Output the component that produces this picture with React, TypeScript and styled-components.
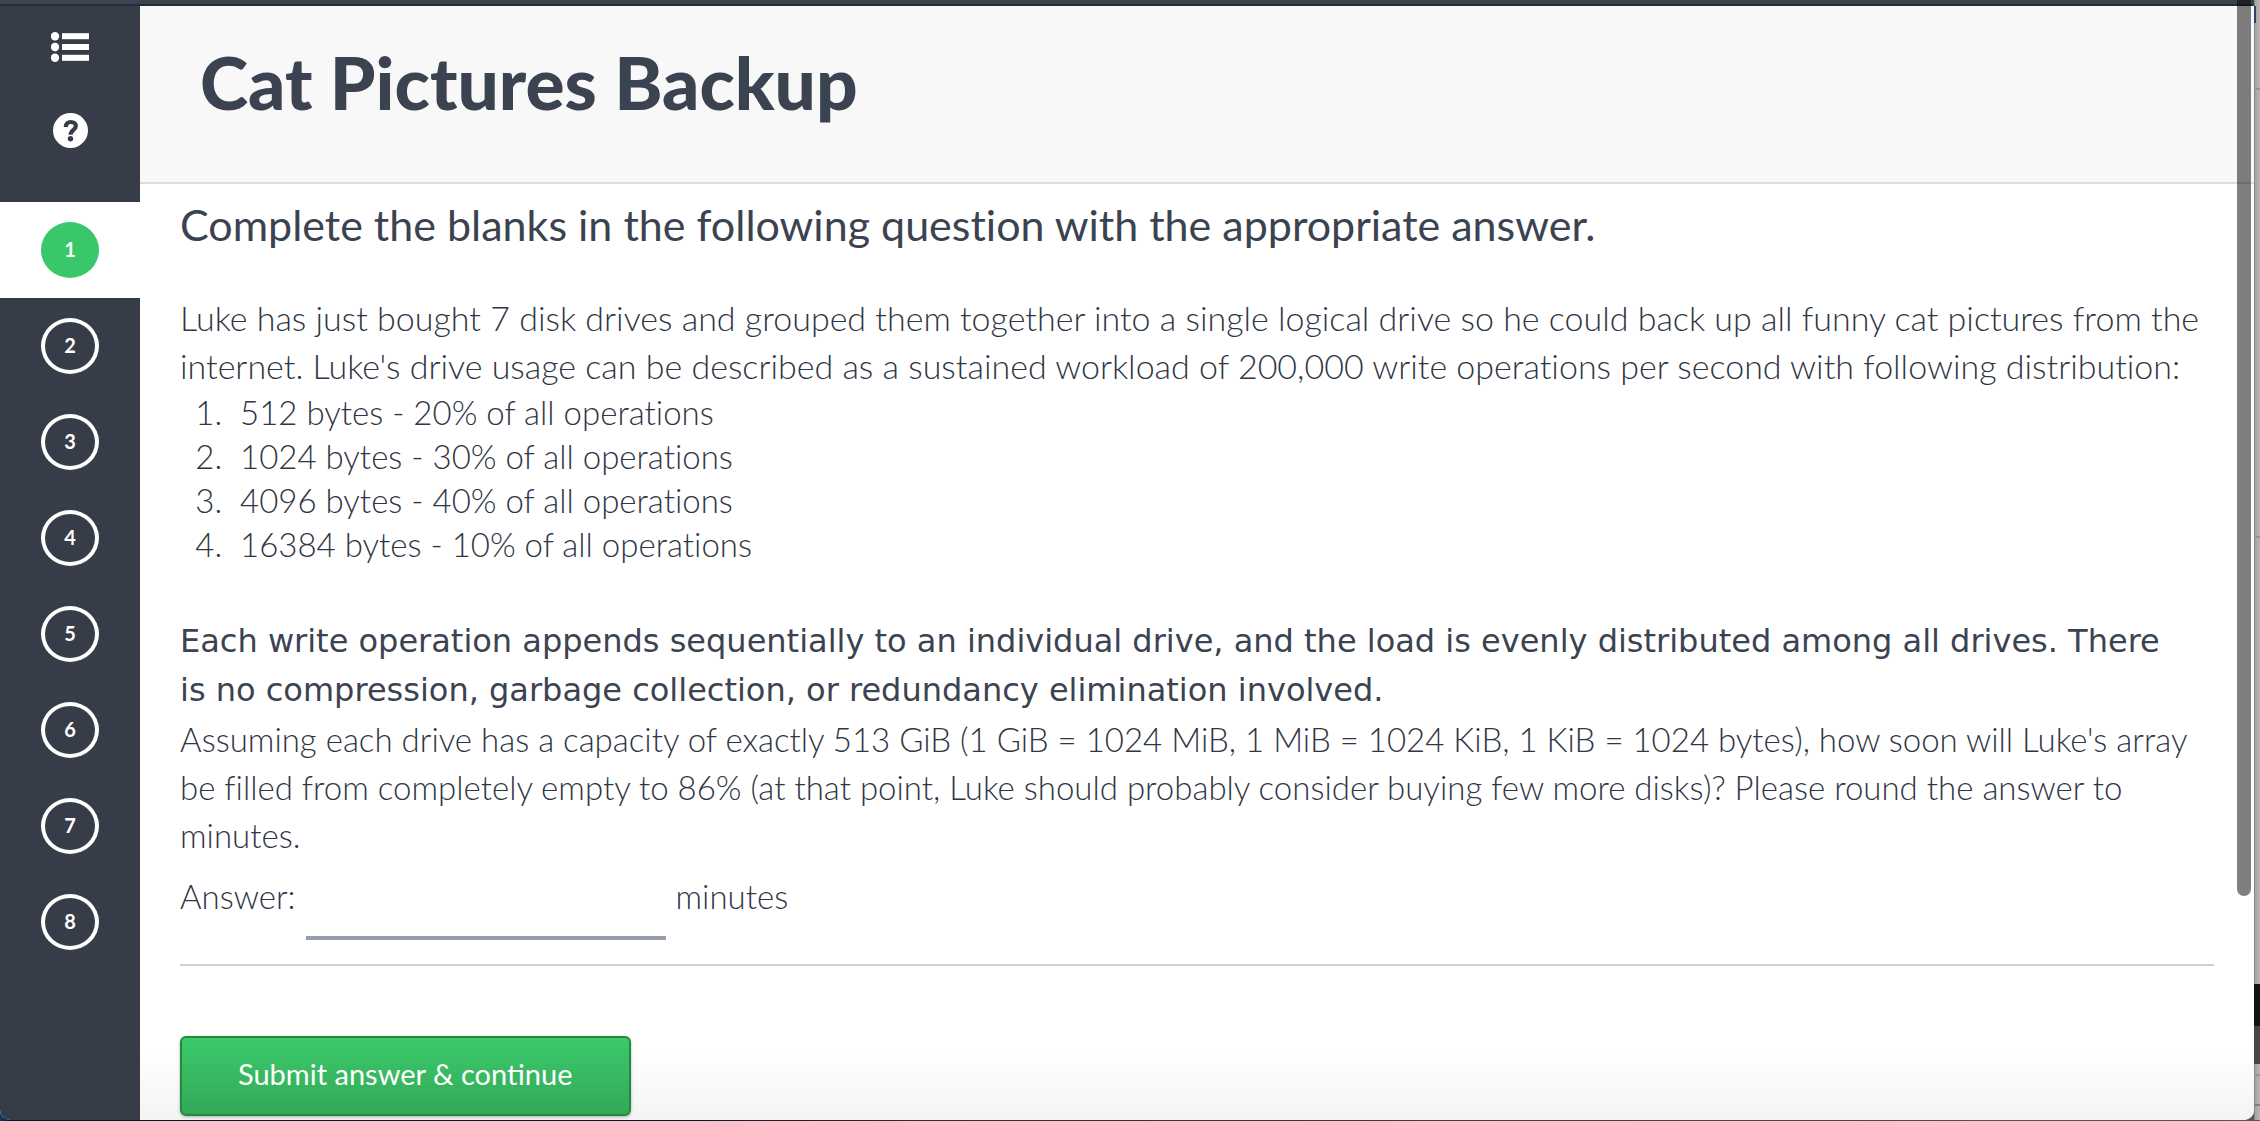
import React from "react";
import styled, { createGlobalStyle } from "styled-components";

const ink = "#3b4351";
const lightInk = "#2f3644";
const humanist = `Lato, "Open Sans", sans-serif`;

const GlobalStyle = createGlobalStyle`
  *, *::before, *::after { box-sizing: border-box; }
  body {
    margin: 0;
    color: ${ink};
    font-family: ${humanist};
    font-variant-ligatures: none;
  }
`;

const Desktop = styled.div`
  display: grid;
  grid-template-columns: minmax(0, 1fr) 6px;
  height: 100vh;
  overflow: hidden;
  padding-bottom: 1px;
  background: linear-gradient(90deg, #123a5c, #07182b 12px, #07182b 30%, #2c2c2e 40%, #55585c);
`;

const Window = styled.div`
  position: relative;
  display: flex;
  flex-direction: column;
  min-height: 0;
  overflow: hidden;
  border-radius: 0 0 10px 10px;
  background: #fff;
`;

const TopBar = styled.div`
  flex: none;
  height: 6px;
  background: #3b4450;
  border-bottom: 2px solid #272c3b;
`;

const Columns = styled.div`
  display: flex;
  flex: 1;
  min-height: 0;
`;

const Sidebar = styled.nav`
  flex: none;
  width: 140px;
  background: #363c48;
`;

const Tools = styled.div`
  display: flex;
  flex-direction: column;
  align-items: center;
  gap: 50px;
  height: 196px;
  padding-top: 26px;
`;

const IconButton = styled.button`
  display: block;
  padding: 0;
  border: 0;
  background: none;
  color: #fff;
  cursor: pointer;

  svg { display: block; }
`;

const Steps = styled.ol`
  margin: 0;
  padding: 0;
  list-style: none;
`;

const Step = styled.li<{ $active: boolean }>`
  display: flex;
  align-items: center;
  justify-content: center;
  height: 96px;
  background: ${(p) => (p.$active ? "#fff" : "transparent")};
`;

const StepLink = styled.a<{ $active: boolean }>`
  display: flex;
  align-items: center;
  justify-content: center;
  width: 58px;
  height: 56px;
  padding-bottom: 2px;
  border: 4px solid ${(p) => (p.$active ? "#3ac76a" : "#fff")};
  border-radius: 50%;
  background: ${(p) => (p.$active ? "#3ac76a" : "transparent")};
  color: #fff;
  font-size: 20px;
  font-weight: 700;
  line-height: 24px;
  text-decoration: none;
`;

const Main = styled.main`
  flex: 1;
  min-width: 0;
  background: linear-gradient(#fff, #fff calc(100% - 70px), #f4f4f4);
`;

const Header = styled.header`
  height: 178px;
  padding: 32px 60px 0;
  background: #f8f8f8;
  border-bottom: 2px solid #dedede;
`;

const Title = styled.h1`
  margin: 0;
  font-size: 73px;
  font-weight: 900;
  line-height: 88px;
`;

const Question = styled.form`
  padding: 15px 40px 0;
`;

const Instruction = styled.h2`
  margin: 0 0 43px;
  font-size: 43px;
  font-weight: 400;
  line-height: 52px;
`;

const Paragraph = styled.p<{ $compact?: boolean }>`
  margin: 0;
  color: ${lightInk};
  font-size: ${(p) => (p.$compact ? 33 : 34)}px;
  font-weight: 300;
  line-height: 48px;
`;

const Emphasis = styled.p`
  margin: 0;
  font-family: "DejaVu Sans", Verdana, sans-serif;
  font-size: 32px;
  line-height: 49px;
`;

const Distribution = styled.ol`
  margin: 0 0 51px;
  padding-left: 60px;
  color: ${lightInk};
  font-size: 33px;
  font-weight: 300;
  line-height: 44px;

  li::marker { content: counter(list-item) ".\\00a0\\00a0"; }
`;

const AnswerRow = styled.div`
  display: flex;
  gap: 10px;
  margin-top: 13px;
  color: ${lightInk};
  font-size: 33px;
  font-weight: 300;
  line-height: 48px;
`;

const AnswerInput = styled.input`
  width: 360px;
  height: 68px;
  padding: 0 8px 20px;
  border: 0;
  border-bottom: 4px solid #959eae;
  border-radius: 0;
  background: transparent;
  color: inherit;
  font: inherit;
  outline: none;
`;

const Divider = styled.hr`
  height: 2px;
  margin: 24px 0 70px;
  border: 0;
  background: #cfcfcf;
`;

const SubmitButton = styled.button`
  display: block;
  height: 80px;
  padding: 0 56px 4px;
  border: 2px solid #23893f;
  border-radius: 6px;
  background: linear-gradient(#3bc96b, #33a958);
  box-shadow: 0 1px 3px rgba(0, 0, 0, 0.3);
  color: #fff;
  font-family: inherit;
  font-size: 29px;
  font-weight: 400;
  line-height: 34px;
  cursor: pointer;
`;

const ScrollThumb = styled.div`
  position: absolute;
  top: 0;
  right: 3px;
  width: 14px;
  height: 80%;
  border-radius: 0 0 7px 7px;
  background: rgba(0, 0, 0, 0.5);
`;

const Behind = styled.div`
  display: flex;
  flex-direction: column;
  background: linear-gradient(90deg, #868686 1px, #a4a4a4 1px, #b6b6b6);
`;

const Strip = styled.div<{ $h: number; $c?: string; $grow?: boolean }>`
  flex: ${(p) => (p.$grow ? "1 1 0" : "none")};
  height: ${(p) => p.$h}px;
  background: ${(p) => p.$c ?? "transparent"};
`;

const steps = [1, 2, 3, 4, 5, 6, 7, 8];
const operations = [
  "512 bytes - 20% of all operations",
  "1024 bytes - 30% of all operations",
  "4096 bytes - 40% of all operations",
  "16384 bytes - 10% of all operations",
];

const ListIcon = () => (
  <svg width="38" height="31" viewBox="0 0 38 31" fill="currentColor" aria-hidden="true">
    {[4.2, 15, 25.8].map((y) => (
      <g key={y}>
        <circle cx="4" cy={y} r="4.2" />
        <rect x="11" y={y - 3} width="27" height="6" />
      </g>
    ))}
  </svg>
);

const HelpIcon = () => (
  <svg width="35" height="35" viewBox="0 0 35 35" aria-hidden="true">
    <circle cx="17.5" cy="17.5" r="17.5" fill="currentColor" />
    <path
      d="M12.8 14C12.8 10.8 14.8 9 17.8 9C20.9 9 22.8 10.8 22.8 13.1C22.8 16.9 17.6 16.8 17.6 21.8"
      fill="none"
      stroke="#363c48"
      strokeWidth="4.2"
    />
    <circle cx="17.5" cy="25.8" r="2.7" fill="#363c48" />
  </svg>
);

export default function App() {
  const [answer, setAnswer] = React.useState("");
  const [current, setCurrent] = React.useState(1);

  return (
    <Desktop>
      <GlobalStyle />
      <Window>
        <TopBar />
        <Columns>
          <Sidebar aria-label="Questions">
            <Tools>
              <IconButton type="button" aria-label="Question list">
                <ListIcon />
              </IconButton>
              <IconButton type="button" aria-label="Help">
                <HelpIcon />
              </IconButton>
            </Tools>
            <Steps>
              {steps.map((n) => (
                <Step key={n} $active={n === current}>
                  <StepLink
                    href={`#question-${n}`}
                    $active={n === current}
                    onClick={() => setCurrent(n)}
                  >
                    {n}
                  </StepLink>
                </Step>
              ))}
            </Steps>
          </Sidebar>
          <Main>
            <Header>
              <Title>Cat Pictures Backup</Title>
            </Header>
            <Question onSubmit={(e) => e.preventDefault()}>
              <Instruction>
                Complete the blanks in the following question with the appropriate answer.
              </Instruction>
              <Paragraph>
                Luke has just bought 7 disk drives and grouped them together into a single logical
                drive so he could back up all funny cat pictures from the
                <br />
                internet. Luke's drive usage can be described as a sustained workload of 200,000
                write operations per second with following distribution:
              </Paragraph>
              <Distribution>
                {operations.map((text) => (
                  <li key={text}>{text}</li>
                ))}
              </Distribution>
              <Emphasis>
                Each write operation appends sequentially to an individual drive, and the load is
                evenly distributed among all drives. There
                <br />
                is no compression, garbage collection, or redundancy elimination involved.
              </Emphasis>
              <Paragraph $compact>
                Assuming each drive has a capacity of exactly 513 GiB (1 GiB = 1024 MiB, 1 MiB =
                1024 KiB, 1 KiB = 1024 bytes), how soon will Luke's array
                <br />
                be filled from completely empty to 86% (at that point, Luke should probably
                consider buying few more disks)? Please round the answer to
                <br />
                minutes.
              </Paragraph>
              <AnswerRow>
                <label htmlFor="answer">Answer:</label>
                <AnswerInput
                  id="answer"
                  type="text"
                  value={answer}
                  onChange={(e) => setAnswer(e.target.value)}
                />
                <span>minutes</span>
              </AnswerRow>
              <Divider />
              <SubmitButton type="submit">Submit answer &amp; continue</SubmitButton>
            </Question>
          </Main>
        </Columns>
        <ScrollThumb />
      </Window>
      <Behind aria-hidden="true">
        <Strip $h={6} />
        <Strip $h={17} $c="linear-gradient(90deg, #2c4464 2px, transparent 2px)" />
        <Strip $h={65} />
        <Strip $h={2} $c="#949494" />
        <Strip $h={446} />
        <Strip $h={2} $c="#949494" />
        <Strip $h={0} $grow />
        <Strip $h={42} $c="#121412" />
        <Strip $h={38} $c="#464646" />
        <Strip $h={10} />
        <Strip $h={2} $c="#949494" />
        <Strip $h={28} />
        <Strip $h={2} $c="#808080" />
        <Strip $h={14} />
      </Behind>
    </Desktop>
  );
}
